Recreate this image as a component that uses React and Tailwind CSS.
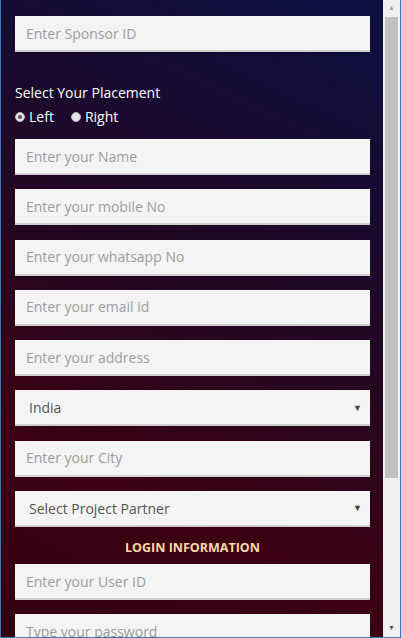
import React from 'react';

const font = { fontFamily: '"Open Sans", "Liberation Sans", sans-serif' };

function Field({ placeholder, type = 'text' }) {
  return (
    <input
      type={type}
      placeholder={placeholder}
      className="block h-[36px] w-full bg-[#f4f4f4] border-b-2 border-[#cfcfcf] px-[11px] text-[14px] text-[#555] placeholder:text-[#9c9c9c] outline-none"
    />
  );
}

function Select({ value }) {
  return (
    <div className="flex h-[36px] w-full items-center justify-between bg-[#f4f4f4] border-b-2 border-[#cfcfcf] pl-[14px] pr-[8px] text-[14px] text-[#555]">
      <span>{value}</span>
      <span className="text-[9px] text-[#444]">▼</span>
    </div>
  );
}

function Radio({ checked, label }) {
  return (
    <label className="flex items-center gap-[4px] text-[14px] text-white">
      <span className="flex h-[10px] w-[10px] items-center justify-center rounded-full bg-[#e6e6e6] border border-[#b5b5b5]">
        {checked && <span className="h-[4px] w-[4px] rounded-full bg-[#555]"></span>}
      </span>
      {label}
    </label>
  );
}

export default function App() {
  return (
    <div style={font} className="flex h-[638px] w-[401px] overflow-hidden border-l border-r border-b border-[#3a78b8] bg-white">
      <div className="flex-1 overflow-hidden bg-[linear-gradient(205deg,#0b0f40_0%,#170a30_25%,#26061e_50%,#3c0012_75%,#320010_100%)] pl-[14px] pr-[13px] pt-[16px]">
        <Field placeholder="Enter Sponsor ID" />

        <div className="mt-[31px] text-[14px] leading-[20px] text-white">Select Your Placement</div>
        <div className="mt-[4px] flex items-center gap-[17px] leading-[20px]">
          <Radio checked label="Left" />
          <Radio label="Right" />
        </div>

        <div className="mt-[12px] flex flex-col gap-[14.3px]">
          <Field placeholder="Enter your Name" />
          <Field placeholder="Enter your mobile No" />
          <Field placeholder="Enter your whatsapp No" />
          <Field placeholder="Enter your email id" />
          <Field placeholder="Enter your address" />
          <Select value="India" />
          <Field placeholder="Enter your City" />
          <Select value="Select Project Partner" />
        </div>

        <div className="mt-[11px] text-center text-[12.5px] font-bold leading-[20px] text-[#ffd9a6]">LOGIN INFORMATION</div>

        <div className="mt-[6px] flex flex-col gap-[14px]">
          <Field placeholder="Enter your User ID" />
          <Field placeholder="Type your password" type="password" />
        </div>
      </div>

      {/* fake scrollbar */}
      <div className="flex w-[17px] flex-col bg-[#f0f0f0]">
        <div className="flex h-[17px] items-center justify-center text-[7px] text-[#a3a3a3]">▲</div>
        <div className="flex-1 px-[2px]">
          <div className="h-[461px] w-full bg-[#c1c1c1]"></div>
        </div>
        <div className="flex h-[17px] items-center justify-center text-[7px] text-[#505050]">▼</div>
      </div>
    </div>
  );
}
